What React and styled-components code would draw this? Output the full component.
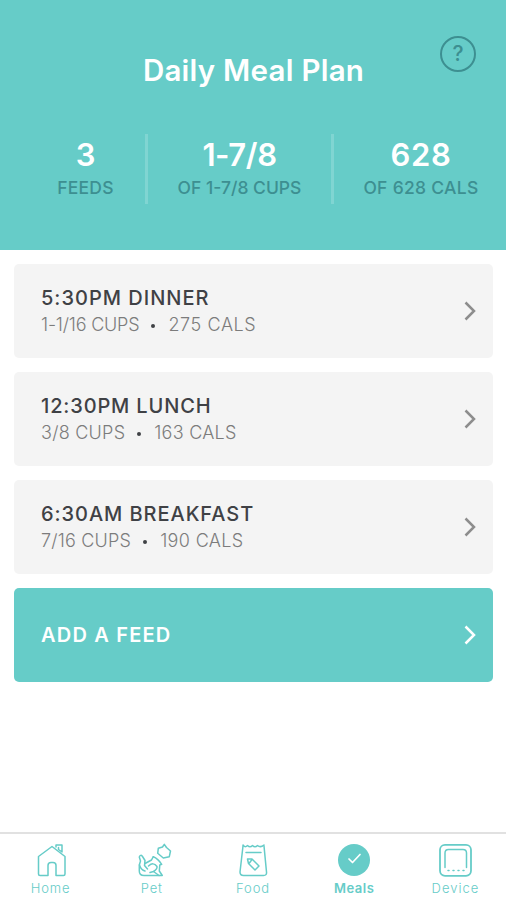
import React from "react";
import styled, { createGlobalStyle, ThemeProvider } from "styled-components";

const theme = {
  teal: "#66ccc8",
  tealDark: "#3d8f91",
  card: "#f4f4f4",
  text: "#3f4145",
  muted: "#7c7c7c",
};

const GlobalStyle = createGlobalStyle`
  * {
    box-sizing: border-box;
  }

  body {
    margin: 0;
    background: #fff;
    font-family: Inter, "Liberation Sans", sans-serif;
  }

  button {
    font-family: inherit;
    border: none;
    margin: 0;
    cursor: pointer;
  }
`;

const Screen = styled.div`
  display: flex;
  flex-direction: column;
  width: 506px;
  height: 900px;
  overflow: hidden;
`;

const Header = styled.header`
  height: 250px;
  flex: none;
  background: ${(props) => props.theme.teal};
`;

const TitleBar = styled.div`
  display: grid;
  grid-template-columns: 67px 1fr 66px;
  height: 134px;
  padding-top: 36px;
`;

const Title = styled.h1`
  grid-column: 2;
  margin: 15px 0 0;
  color: #fff;
  font-size: 29.5px;
  line-height: 38px;
  font-weight: 600;
  letter-spacing: 0.25px;
  text-align: center;
  white-space: nowrap;
`;

const HelpButton = styled.button`
  display: flex;
  align-items: center;
  justify-content: center;
  width: 36px;
  height: 36px;
  padding: 0;
  border: 2px solid ${(props) => props.theme.tealDark};
  border-radius: 50%;
  background: transparent;
  color: ${(props) => props.theme.tealDark};
  font-size: 21px;
  font-weight: 500;
  line-height: 32px;
`;

const Stats = styled.div`
  display: grid;
  grid-template-columns: 119px 186px 177px;
  margin-left: 26px;
  height: 70px;
`;

const Stat = styled.div`
  text-align: center;
  white-space: nowrap;

  & + & {
    border-left: 3px solid #80d5d2;
  }
`;

const StatValue = styled.div`
  margin-top: 1px;
  color: #fff;
  font-size: 31px;
  line-height: 40px;
  font-weight: 600;
  letter-spacing: ${(props) => props.$spacing || 0}px;
`;

const StatLabel = styled.div`
  margin-top: 1px;
  color: ${(props) => props.theme.tealDark};
  font-size: 17.5px;
  line-height: 24px;
  font-weight: 500;
  letter-spacing: ${(props) => props.$spacing || 0}px;
`;

const Feeds = styled.main`
  flex: 1;
  display: flex;
  flex-direction: column;
  gap: 14px;
  padding: 14px 13px 0 14px;
`;

const Card = styled.button`
  display: flex;
  align-items: center;
  justify-content: space-between;
  height: 94px;
  flex: none;
  padding: 0 16px 0 27px;
  border-radius: 5px;
  text-align: left;
  color: ${(props) => props.theme.text};
  background: ${(props) => props.theme.card};
`;

const AddCard = styled(Card)`
  color: #fff;
  background: ${(props) => props.theme.teal};
`;

const CardTitle = styled.div`
  font-size: 20px;
  line-height: 28px;
  font-weight: ${(props) => props.$weight || 500};
  letter-spacing: ${(props) => props.$spacing || 0}px;
  white-space: nowrap;
`;

const CardMeta = styled.div`
  display: flex;
  align-items: center;
  color: ${(props) => props.theme.muted};
  font-size: 18px;
  line-height: 26px;
  font-weight: 300;
  letter-spacing: ${(props) => props.$spacing || 0}px;
  white-space: nowrap;
`;

const Dot = styled.span`
  width: 4px;
  height: 4px;
  margin: 2px 13px 0 12px;
  border-radius: 50%;
  background: ${(props) => props.theme.text};
`;

const TabBar = styled.nav`
  display: grid;
  grid-template-columns: repeat(5, 1fr);
  height: 68px;
  flex: none;
  border-top: 2px solid #e1e1e1;
`;

const Tab = styled.button`
  display: flex;
  flex-direction: column;
  align-items: center;
  padding: 9px 0 0;
  background: transparent;
  color: ${(props) => props.theme.teal};
  font-size: 13px;
  line-height: 18px;
  font-weight: ${(props) => (props.$active ? 600 : 300)};
  letter-spacing: ${(props) => props.$spacing || 0}px;

  svg {
    display: block;
    margin-bottom: 2px;
    overflow: visible;
  }
`;

const Icon = ({ children }) => (
  <svg
    width="34"
    height="34"
    viewBox="0 0 34 34"
    fill="none"
    stroke="currentColor"
    strokeWidth="1.5"
    strokeLinecap="round"
    strokeLinejoin="round"
  >
    {children}
  </svg>
);

const Chevron = ({ color }) => (
  <svg width="14" height="22" viewBox="0 0 14 22" fill="none" stroke={color} strokeWidth="2.5">
    <path d="M2.5 2.5 L11 11 L2.5 19.5" />
  </svg>
);

const HomeIcon = () => (
  <Icon>
    <path d="M4.5 13.5 L18 3.5 L31 13.5 V31 Q31 32.5 29.5 32.5 H22 V22.5 Q22 19.5 19 19.5 H17 Q14 19.5 14 22.5 V32.5 H6 Q4.5 32.5 4.5 31 Z" />
    <path d="M22 4 V2 H28 V9 L24.5 6.5 V4.5" />
  </Icon>
);

const PetIcon = () => (
  <Icon>
    <path d="M23.3 5.3 L27.5 4 L29.3 1.3 L31.5 4.5 L35.5 8 L34.3 13.7 L28.3 15 L22.7 10.3 Z" />
    <path d="M18.3 13.7 Q23 15.5 26.7 21.3 L24.8 22 L24.3 28 L27.3 32.5 H9 Q4.3 32.5 4.3 28 V22 L5.5 18 L4.3 14 Q5.5 11 7.5 13.5 L10 17.5 L9.5 22.5 L12.5 26" />
    <path d="M18.3 13.7 L16.5 17 L10 20.5 M13.5 23 Q18.5 18.5 22 23.5 Q22.5 26 18.5 28.5 L24 32.5 M18.5 28.5 L15 29.5 M4.5 22 Q6 27 10 28" />
  </Icon>
);

const FoodIcon = () => (
  <Icon>
    <path d="M7 3 L4 29 Q4 32.5 7.5 32.5 H27.5 Q31 32.5 30.5 29 L28 3" />
    <path d="M7 2 Q9 5 11.5 2.5 Q14 5 16.5 2.5 Q19 5 21.5 2.5 Q24.5 5 28 2 M10 9.5 H25" />
    <path d="M11.5 16 L16 16 L23 23 L19 27 L12.5 20.5 Z M16 16.5 L13 20.5" />
  </Icon>
);

const MealsIcon = () => (
  <Icon>
    <circle cx="17" cy="17" r="16" fill="currentColor" stroke="none" />
    <path d="M12 16 L15.5 19.5 L23 11.5" stroke="#fff" strokeWidth="1.7" />
  </Icon>
);

const DeviceIcon = () => (
  <Icon>
    <rect x="2" y="1.8" width="31" height="31" rx="5" strokeWidth="1.8" />
    <path d="M7 24.5 V10 Q7 6.5 10.5 6.5 H25 Q28.5 6.5 28.5 10 V24.5" />
    <path d="M10 27.5 H11 M15 27.5 H16 M20 27.5 H21 M25 27.5 H26" />
  </Icon>
);

const stats = [
  { value: "3", label: "FEEDS", labelSpacing: 0.2 },
  { value: "1-7/8", label: "OF 1-7/8 CUPS", labelSpacing: 0, spacing: -0.4 },
  { value: "628", label: "OF 628 CALS", labelSpacing: 0.3, spacing: 0.7 },
];

const meals = [
  { title: "5:30PM DINNER", cups: "1-1/16 CUPS", cals: "275 CALS", spacing: 1, metaSpacing: 0.6, cupsSpacing: -0.2 },
  { title: "12:30PM LUNCH", cups: "3/8 CUPS", cals: "163 CALS", spacing: 0.85, metaSpacing: 0.25 },
  { title: "6:30AM BREAKFAST", cups: "7/16 CUPS", cals: "190 CALS", spacing: 0.95, metaSpacing: 0.35, cupsSpacing: 0.2 },
];

const tabs = [
  { label: "Home", icon: <HomeIcon />, spacing: 0.9 },
  { label: "Pet", icon: <PetIcon />, spacing: 0.9 },
  { label: "Food", icon: <FoodIcon />, spacing: 0.9 },
  { label: "Meals", icon: <MealsIcon />, spacing: 0.5, active: true },
  { label: "Device", icon: <DeviceIcon />, spacing: 1 },
];

export default function App() {
  return (
    <ThemeProvider theme={theme}>
      <GlobalStyle />
      <Screen>
        <Header>
          <TitleBar>
            <Title>Daily Meal Plan</Title>
            <HelpButton>?</HelpButton>
          </TitleBar>
          <Stats>
            {stats.map((stat) => (
              <Stat key={stat.label}>
                <StatValue $spacing={stat.spacing}>{stat.value}</StatValue>
                <StatLabel $spacing={stat.labelSpacing}>{stat.label}</StatLabel>
              </Stat>
            ))}
          </Stats>
        </Header>
        <Feeds>
          {meals.map((meal) => (
            <Card key={meal.title}>
              <div>
                <CardTitle $spacing={meal.spacing}>{meal.title}</CardTitle>
                <CardMeta $spacing={meal.cupsSpacing ?? meal.metaSpacing}>
                  {meal.cups}
                  <Dot />
                  <CardMeta as="span" $spacing={meal.metaSpacing}>{meal.cals}</CardMeta>
                </CardMeta>
              </div>
              <Chevron color="#8d8d8d" />
            </Card>
          ))}
          <AddCard>
            <CardTitle $weight={600} $spacing={1.2}>ADD A FEED</CardTitle>
            <Chevron color="#fff" />
          </AddCard>
        </Feeds>
        <TabBar>
          {tabs.map((tab) => (
            <Tab key={tab.label} $active={tab.active} $spacing={tab.spacing}>
              {tab.icon}
              {tab.label}
            </Tab>
          ))}
        </TabBar>
      </Screen>
    </ThemeProvider>
  );
}
